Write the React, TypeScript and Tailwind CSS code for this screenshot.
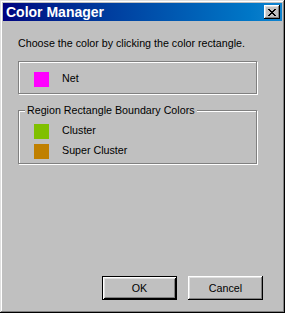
const swatches = [
  { label: 'Cluster', color: 'bg-[#80c000]' },
  { label: 'Super Cluster', color: 'bg-[#c08000]' },
];

function CloseGlyph() {
  // 8x7 pixel "X" like the classic caption button
  const rows = ['XX....XX', '.XX..XX.', '..XXXX..', '...XX...', '..XXXX..', '.XX..XX.', 'XX....XX'];
  return (
    <svg width="8" height="7" viewBox="0 0 8 7" shapeRendering="crispEdges">
      {rows.flatMap((row, y) =>
        row.split('').map((c, x) => (c === 'X' ? <rect key={`${x}-${y}`} x={x} y={y} width="1" height="1" fill="#000" /> : null))
      )}
    </svg>
  );
}

export default function App() {
  return (
    <div className="w-[285px] h-[313px] bg-[#c0c0c0] p-[3px] flex flex-col text-black font-['Liberation_Sans',Arial,sans-serif] shadow-[inset_-1px_-1px_#000,inset_1px_1px_#dfdfdf,inset_-2px_-2px_#808080,inset_2px_2px_#fff]">
      {/* Title bar */}
      <div className="h-[18px] flex items-center pl-[3px] pr-[2px] bg-linear-to-r from-[#000080] to-[#1084d0]">
        <span className="text-white font-bold text-[14px] leading-none">Color Manager</span>
        <div className="ml-auto w-[16px] h-[14px] bg-[#c0c0c0] flex items-center justify-center shadow-[inset_-1px_-1px_#000,inset_1px_1px_#fff,inset_-2px_-2px_#808080,inset_2px_2px_#dfdfdf]">
          <CloseGlyph />
        </div>
      </div>

      {/* Body */}
      <div className="flex-1 flex flex-col px-[15px] pt-[16px] pb-[10px] text-[10.7px] leading-[13px]">
        <p>Choose the color by clicking the color rectangle.</p>

        <div className="mt-[11px] w-[239px] h-[33px] border border-[#808080] shadow-[1px_1px_0_#fff,inset_1px_1px_0_#fff] flex items-start gap-[13px] px-[15px] pt-[10px]">
          <div className="w-[15px] h-[15px] bg-[#ff00ff]" />
          <span>Net</span>
        </div>

        <div className="relative mt-[16px] w-[239px] h-[54px] border border-[#808080] shadow-[1px_1px_0_#fff,inset_1px_1px_0_#fff] flex flex-col gap-[5px] px-[15px] pt-[13px]">
          <span className="absolute top-[-7px] left-[6px] px-[2px] bg-[#c0c0c0]">Region Rectangle Boundary Colors</span>
          {swatches.map((s) => (
            <div key={s.label} className="flex items-start gap-[13px]">
              <div className={`w-[15px] h-[15px] ${s.color}`} />
              <span>{s.label}</span>
            </div>
          ))}
        </div>

        <div className="mt-auto flex justify-end gap-[11px] pr-[4px]">
          <button className="w-[75px] h-[24px] bg-[#c0c0c0] border border-black shadow-[inset_1px_1px_#fff,inset_-1px_-1px_#000,inset_2px_2px_#dfdfdf,inset_-2px_-2px_#808080]">
            OK
          </button>
          <button className="w-[75px] h-[24px] bg-[#c0c0c0] shadow-[inset_-1px_-1px_#000,inset_1px_1px_#fff,inset_-2px_-2px_#808080,inset_2px_2px_#dfdfdf]">
            Cancel
          </button>
        </div>
      </div>
    </div>
  );
}
